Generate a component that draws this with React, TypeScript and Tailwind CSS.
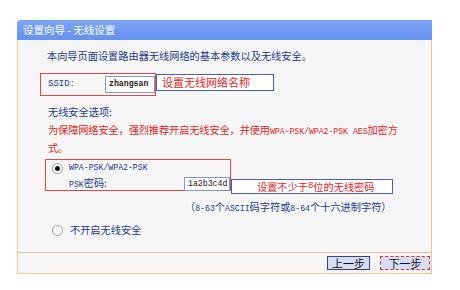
import React from 'react';

const cjk = "font-['Noto_Sans_CJK_SC','Noto_Sans',sans-serif]";
const mono = "font-['Liberation_Mono',monospace]";

// small radio dot drawn with css
const Radio: React.FC<{ checked?: boolean }> = ({ checked }) => (
  <span className="flex h-[11px] w-[11px] shrink-0 items-center justify-center rounded-full border border-[#8c99a6] bg-white">
    {checked && <span className="h-[5px] w-[5px] rounded-full bg-[#111]" />}
  </span>
);

const WizardPanel: React.FC = () => {
  return (
    <div className="w-[415px]">
      {/* title bar */}
      <div className="flex h-[20px] items-center rounded-tl-[4px] bg-gradient-to-b from-[#7ba5f5] to-[#6592f0] pl-[6px]">
        <span className={`${cjk} text-[10.5px] leading-none text-white`}>设置向导 - 无线设置</span>
      </div>

      <div className="border-x border-b border-[#efc48e] bg-[#f6f6f6]">
        <div className={`${cjk} h-[212px] text-[10.2px] text-[#1c3c8e]`}>
          <p className="ml-[29px] pt-[9px] leading-[14px]">本向导页面设置路由器无线网络的基本参数以及无线安全。</p>

          {/* SSID */}
          <div className="mt-[10px] ml-[22px] flex items-start">
            <div className="flex h-[23px] w-[116px] items-center border border-[#e0484a] pl-[7px]">
              <span className={`${mono} w-[57px] text-[9px] text-[#1c3c8e]`}>SSID:</span>
              <span className={`${mono} flex h-[17px] w-[50px] items-center border border-[#7f9db9] bg-white pl-[3px] text-[8.2px] font-bold text-[#222]`}>
                zhangsan
              </span>
            </div>
            <div className="mt-[1px] flex h-[17px] w-[118px] items-center border border-[#4a5fa8] bg-white pl-[5px] text-[11px] text-[#e5231c]">
              设置无线网络名称
            </div>
          </div>

          <p className="mt-[9px] ml-[30px] leading-[14px]">无线安全选项:</p>
          <p className="mt-[3px] ml-[30px] leading-[16px] tracking-[-0.1px] text-[#e5231c]">
            为保障网络安全，强烈推荐开启无线安全，并使用<span className={`${mono} text-[8.3px]`}>WPA-PSK/WPA2-PSK AES</span>加密方
            <br />
            式。
          </p>

          {/* WPA block */}
          <div className="mt-[3px] ml-[27px] flex h-[32px] items-start">
            <div className="flex h-[32px] w-[186px] flex-col border border-[#e0484a]">
              <div className="mt-[2px] flex items-center pl-[6px]">
                <Radio checked />
                <span className={`${mono} ml-[6px] text-[8.2px] leading-[12px]`}>WPA-PSK/WPA2-PSK</span>
              </div>
              <div className="mt-[3px] flex items-center pl-[23px]">
                <span className="w-[115px] leading-[12px]">
                  <span className={`${mono} text-[8.2px]`}>PSK</span>密码:
                </span>
                <span className={`${mono} flex h-[14px] w-[46px] items-center border border-[#7f9db9] bg-white pl-[3px] text-[8.2px] text-[#222]`}>
                  1a2b3c4d
                </span>
              </div>
            </div>
            <div className="mt-[20px] flex h-[15px] w-[162px] items-center border border-[#4a5fa8] bg-white pl-[25px] text-[10.2px] text-[#e5231c]">
              设置不少于<span className={`${mono} text-[9px]`}>8</span>位的无线密码
            </div>
          </div>

          <p className="mt-[9px] ml-[167px] leading-[14px]">
            （<span className={`${mono} text-[8.2px]`}>8-63</span>个<span className={`${mono} text-[8.2px]`}>ASCII</span>码字符或<span className={`${mono} text-[8.2px]`}>8-64</span>个十六进制字符）
          </p>

          <div className="mt-[7px] ml-[34px] flex items-center">
            <Radio />
            <span className="ml-[7px] leading-[14px]">不开启无线安全</span>
          </div>
        </div>

        {/* footer with buttons */}
        <div className="flex h-[21px] items-center justify-end gap-[10px] border-t border-[#efc48e] pr-[1px]">
          <button className={`${cjk} flex h-[14px] w-[43px] items-center justify-center border border-[#39436b] bg-[#d7dcf7] text-[11px] leading-none text-[#111]`}>
            上一步
          </button>
          <button className={`${cjk} flex h-[14px] w-[50px] items-center justify-center border border-dashed border-[#c0393a] bg-[#d7dcf7] text-[11px] leading-none text-[#111]`}>
            下一步
          </button>
        </div>
      </div>
    </div>
  );
};

export default function App() {
  return (
    <div className="h-[290px] w-[460px] overflow-hidden bg-white pt-[20px] pl-[17px]">
      <WizardPanel />
    </div>
  );
}
